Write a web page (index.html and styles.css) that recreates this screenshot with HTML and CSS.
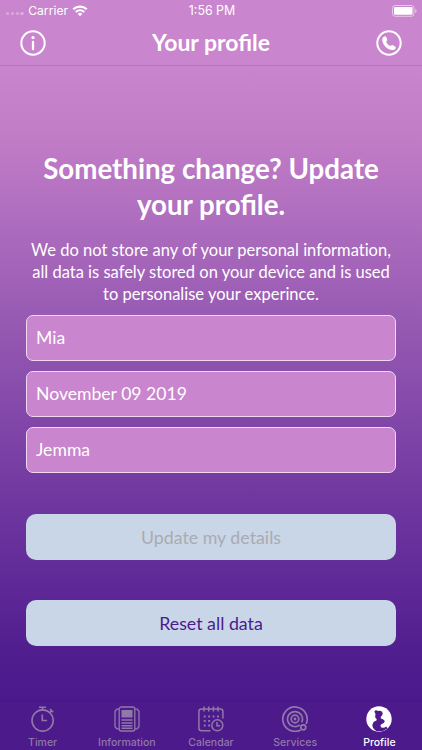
FILE: index.html
```html
<!DOCTYPE html>
<html lang="en">
<head>
<meta charset="utf-8">
<title>Your profile</title>
<link rel="stylesheet" href="styles.css">
</head>
<body>
<div class="screen">
  <header class="top">
    <div class="status">
      <div class="carrier">
        <i class="dot"></i><i class="dot"></i><i class="dot"></i><i class="dot"></i>
        <span class="carrier-name">Carrier</span>
        <svg class="wifi" viewBox="0 0 16 12"><g fill="none" stroke="#fff" stroke-width="2.1"><path d="M1.2 4.3A10 10 0 0 1 14.8 4.3"/><path d="M3.7 7A6.3 6.3 0 0 1 12.3 7"/></g><path fill="#fff" d="M5.6 8.8Q8 6.9 10.4 8.8L8 11.3z"/></svg>
      </div>
      <span class="clock">1:56 PM</span>
      <svg class="battery" viewBox="0 0 26 12"><rect x=".5" y=".5" width="21.5" height="10.8" rx="2.7" fill="none" stroke="#fff" stroke-opacity=".55"/><rect x="2" y="2" width="18.5" height="7.8" rx="1.3" fill="#fff"/><path d="M23.2 4v4q1.4-.6 1.4-2t-1.4-2" fill="#fff" fill-opacity=".55"/></svg>
    </div>
    <div class="nav">
      <svg class="nav-icon" viewBox="0 0 26 26" fill="none" stroke="#fff"><circle cx="13" cy="13" r="11.7" stroke-width="2"/><circle cx="13" cy="7.6" r="1.6" fill="#fff" stroke="none"/><path d="M13 11.8v7.4" stroke-width="2.3" stroke-linecap="round"/></svg>
      <h1 class="title">Your profile</h1>
      <svg class="nav-icon" viewBox="0 0 26 26"><circle cx="13" cy="13" r="11.7" fill="none" stroke="#fff" stroke-width="2"/><path fill="#fff" d="M8.1 6.4Q9.5 5.7 10.2 7.1L11.2 9.2Q11.7 10.3 10.4 11.2C10 13 13.1 16.2 15 15.8Q16 14.7 17 15.3L19.4 16.8Q20.3 17.5 19.4 18.7Q18.5 20.2 16.3 20.1C11.1 19.8 6.2 14.3 6.2 9.5Q6.2 7.2 8.1 6.4z"/></svg>
    </div>
  </header>

  <main class="content">
    <h2 class="heading">Something change? Update<br>your profile.</h2>
    <p class="intro">We do not store any of your personal information,<br>all data is safely stored on your device and is used<br>to personalise your experince.</p>
    <div class="fields">
      <div class="field">Mia</div>
      <div class="field">November 09 2019</div>
      <div class="field">Jemma</div>
    </div>
    <div class="actions">
      <button class="button" disabled>Update my details</button>
      <button class="button">Reset all data</button>
    </div>
  </main>

  <nav class="tabs">
    <div class="tab">
      <svg class="tab-icon" viewBox="0 0 26 26" fill="none" stroke="currentColor" stroke-width="1.6"><circle cx="12.6" cy="14.5" r="10.6"/><path d="M9 1.3h7M12.5 1.3v2.5M12.3 8.5v6h4.8M20 3l3.2 3.2M21.7 4.6l-2 2"/></svg>
      <span>Timer</span>
    </div>
    <div class="tab">
      <svg class="tab-icon" viewBox="0 0 26 26" fill="none" stroke="currentColor" stroke-width="1.3"><rect x="5.2" y="1" width="15.6" height="24" rx="2"/><path d="M5 3.2H2.8L1 5.2v15.6l1.8 2H5M21 3.2h2.2L25 5.2v15.6l-1.8 2H21"/><rect x="7.5" y="4" width="11" height="7.5" fill="currentColor" stroke="none"/><path d="M7.5 14h11M7.5 17h11M7.5 19.8h11M7.5 22.3h11" stroke-width="1.5"/></svg>
      <span>Information</span>
    </div>
    <div class="tab">
      <svg class="tab-icon" viewBox="0 0 26 26" fill="none" stroke="currentColor" stroke-width="1.5"><path d="M12.5 24.7H3.5Q.9 24.7.9 22.2V5.4Q.9 2.9 3.5 2.9H22.4Q24.9 2.9 24.9 5.4V12.5M6 .5v5M10.7 .5v5M15.4 .5v5M20 .5v5"/><path d="M5.8 10.5h16M5.8 15h8M5.8 19.5h7" stroke-width="1.9" stroke-dasharray="1.9 2.5"/><circle cx="19.3" cy="19.3" r="5.5"/><path d="M19 16v3.7h3"/></svg>
      <span>Calendar</span>
    </div>
    <div class="tab">
      <svg class="tab-icon" viewBox="0 0 26 26" fill="none" stroke="currentColor" stroke-width="1.7"><path d="M18.8 23.9A12.2 12.2 0 1 1 24.2 18M17.8 18.8A7.5 7.5 0 1 1 19.7 16.4"/><circle cx="13" cy="13" r="3.8"/><circle cx="13" cy="13" r="1.4" fill="currentColor" stroke="none"/><circle cx="21.3" cy="21.3" r="2.5"/></svg>
      <span>Services</span>
    </div>
    <div class="tab active">
      <svg class="tab-icon" viewBox="0 0 26 26"><circle cx="13" cy="13" r="12.7" fill="#fff"/><path fill="#4e1b8d" d="M9 4.6Q10.5 3.6 12 5Q14 4.2 15.9 5.4Q17.3 7 16.3 9.2L14.8 10.8V12.4Q18.4 13.2 18.8 15.6Q17.8 17.6 15.4 18.2Q13.6 19.6 15.4 21.4Q17.9 22.4 20.2 20.5L21.5 22.4Q16.8 26 10.2 24.9Q6 22.2 6.4 18.4Q7.2 15.4 10.4 14.6Q11.2 13.6 10.2 12.4Q8.7 11.8 9.2 9.8Q9.8 8.6 9.3 7.4Q7.6 5.8 9 4.6z"/></svg>
      <span>Profile</span>
    </div>
  </nav>
</div>
</body>
</html>
```
FILE: styles.css
```css
* { box-sizing: border-box; }
body { margin: 0; }
.screen {
  width: 422px;
  height: 750px;
  display: flex;
  flex-direction: column;
  overflow: hidden;
  color: #fff;
  font-family: Lato, "Open Sans", sans-serif;
  background: linear-gradient(#c985cd 66px, #c17cc7 140px, #995cb4 310px, #7037a0 500px, #511e8f 650px, #4b198c 702px);
}
.top { height: 66px; flex: none; background: #c985cd; border-bottom: 1px solid #b475bc; }
.status {
  height: 20px;
  display: grid;
  grid-template-columns: 1fr auto 1fr;
  align-items: center;
  padding: 1px 4px 0 6px;
  font: 12.2px/18px Inter, sans-serif;
}
.carrier { display: flex; align-items: center; }
.dot { width: 3.4px; height: 3.4px; margin: 6px 1.4px 0 0; border-radius: 50%; background: #dda9df; }
.carrier-name { margin-left: 3px; }
.wifi { width: 16px; height: 12px; margin-left: 4px; }
.clock { font-size: 12.4px; }
.battery { width: 26px; height: 12px; justify-self: end; }
.nav { height: 45px; display: flex; align-items: center; justify-content: space-between; padding: 0 20px; }
.nav-icon { width: 26px; height: 26px; }
.title { margin: 0; padding-bottom: 1px; font-size: 23px; line-height: 27px; font-weight: 700; }
.content { flex: 1; padding: 85px 26px 0; text-align: center; }
.heading { margin: 0; font-size: 27.7px; line-height: 36px; font-weight: 700; white-space: nowrap; }
.intro { margin: 16px -10px 0; font-size: 16.5px; line-height: 22px; white-space: nowrap; font-variant-ligatures: none; }
.fields { display: grid; gap: 10px; margin-top: 10px; }
.field {
  height: 46px;
  display: flex;
  align-items: center;
  padding: 0 9px 2px;
  border: 1px solid #f0d7f2;
  border-radius: 7px;
  background: #c985cd;
  font-size: 17.6px;
}
.actions { display: grid; gap: 40px; margin-top: 41px; }
.button {
  height: 46px;
  padding: 0;
  border: 0;
  border-radius: 10px;
  background: #c9d6e8;
  color: #4c1a8f;
  font: 17.8px/24px Lato, sans-serif;
}
.button:disabled { color: #a9abb1; }
.tabs { height: 49px; flex: none; display: grid; grid-template-columns: repeat(5, 84.2px); background: #4d1a8c; border-top: 1px solid #471782; justify-content: center; }
.tab { display: flex; flex-direction: column; align-items: center; padding-top: 4px; color: #9078a8; font: 500 10.5px/13px Inter, sans-serif; }
.tab-icon { width: 26px; height: 26px; margin-bottom: 4px; }
.active { color: #fff; }
```
